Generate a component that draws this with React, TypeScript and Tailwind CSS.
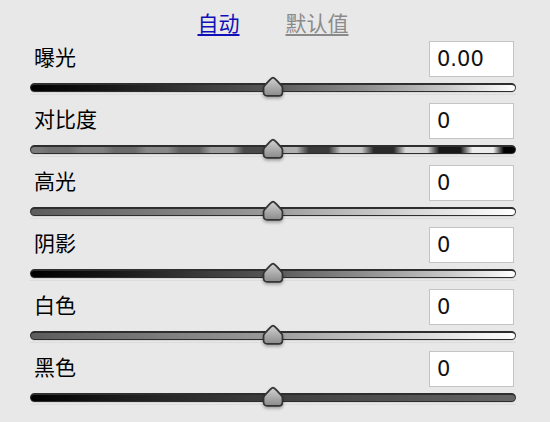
const rows = [
  {
    label: "曝光",
    value: "0.00",
    track:
      "bg-[linear-gradient(to_right,#000_0%,#111_12%,#2e2e2e_28%,#555_48%,#8a8a8a_68%,#c8c8c8_86%,#fff_100%)]",
  },
  {
    label: "对比度",
    value: "0",
    track:
      "bg-[linear-gradient(to_right,#7c7c7c_0%,#7c7c7c_1.5%,#707070_3.9%,#707070_8%,#808080_10.5%,#808080_14.8%,#6a6a6a_17.3%,#6a6a6a_21.4%,#888_23.9%,#888_28.2%,#626262_30.7%,#626262_34.8%,#9a9a9a_37.2%,#9a9a9a_41.6%,#4a4a4a_44%,#4a4a4a_48.1%,#b0b0b0_50.6%,#b0b0b0_54.9%,#3a3a3a_57.4%,#3a3a3a_61.5%,#c4c4c4_64%,#c4c4c4_68.3%,#2a2a2a_70.8%,#2a2a2a_74.9%,#d8d8d8_77.4%,#d8d8d8_81.9%,#181818_84.4%,#181818_88.7%,#ececec_91.2%,#ececec_95.5%,#000_97.7%,#000_100%)]",
  },
  {
    label: "高光",
    value: "0",
    track:
      "bg-[linear-gradient(to_right,#5c5c5c_0%,#7a7a7a_25%,#9c9c9c_50%,#cfcfcf_75%,#fff_100%)]",
  },
  {
    label: "阴影",
    value: "0",
    track:
      "bg-[linear-gradient(to_right,#000_0%,#141414_15%,#333_32%,#585858_50%,#8c8c8c_68%,#c8c8c8_86%,#fff_100%)]",
  },
  {
    label: "白色",
    value: "0",
    track:
      "bg-[linear-gradient(to_right,#5c5c5c_0%,#7a7a7a_25%,#9c9c9c_50%,#cfcfcf_75%,#fff_100%)]",
  },
  {
    label: "黑色",
    value: "0",
    track:
      "bg-[linear-gradient(to_right,#000_0%,#1e1e1e_20%,#3a3a3a_45%,#4e4e4e_70%,#666_100%)]",
  },
];

function Thumb({ id }: { id: string }) {
  return (
    <svg
      width="22"
      height="22"
      viewBox="0 0 21 21"
      className="absolute left-[232px] top-[-7px] drop-shadow-[0_2px_1.5px_rgba(0,0,0,0.3)]"
    >
      <defs>
        <linearGradient id={id} x1="0" y1="0" x2="0" y2="1">
          <stop offset="0%" stopColor="#d2d2d2" />
          <stop offset="100%" stopColor="#8a8a8a" />
        </linearGradient>
      </defs>
      <path
        d="M10.5 1.5 C11.5 1.5 12.5 2.5 14 4.2 L18.6 9.2 C19.3 10 19.5 10.6 19.5 11.5 L19.5 15.5 C19.5 17.8 18 19 16 19 L5 19 C3 19 1.5 17.8 1.5 15.5 L1.5 11.5 C1.5 10.6 1.7 10 2.4 9.2 L7 4.2 C8.5 2.5 9.5 1.5 10.5 1.5 Z"
        fill={`url(#${id})`}
        stroke="#333"
        strokeWidth="1.6"
      />
    </svg>
  );
}

export default function App() {
  return (
    <div className="w-[550px] h-[422px] bg-[#e8e8e8] pl-[30px] pt-[8px] overflow-hidden font-['Noto_Sans_CJK_SC',sans-serif]">
      <div className="w-[486px] h-[28px] flex items-center justify-center gap-[46px] text-[21px] leading-none">
        <span className="text-[#1010b8] underline underline-offset-[3px]">
          自动
        </span>
        <span className="text-[#8a8a8a] underline underline-offset-[3px]">
          默认值
        </span>
      </div>

      <div className="mt-[5px] w-[486px] flex flex-col">
        {rows.map((row, i) => (
          <div key={row.label} className="h-[62px] flex flex-col">
            <div className="h-[36px] flex items-center justify-between">
              <span className="pl-[4px] pb-[6px] text-[21px] leading-none text-black">
                {row.label}
              </span>
              <div className="mr-[2px] w-[85px] h-[36px] bg-white border border-[#c4c4c4] flex items-center pl-[7px] pt-[2px] font-['DejaVu_Sans',sans-serif] text-[21px] text-[#111]">
                {row.value}
              </div>
            </div>
            <div className="relative mt-[6px] h-[9px]">
              <div
                className={`h-[9px] rounded-full border border-[#2e2e2e] border-t-2 shadow-[0_1px_0_#d6d6d6] ${row.track}`}
              />
              <Thumb id={`thumb-${i}`} />
            </div>
            <div className="mt-[2px] h-px bg-[#dcdcdc]" />
          </div>
        ))}
      </div>
    </div>
  );
}
